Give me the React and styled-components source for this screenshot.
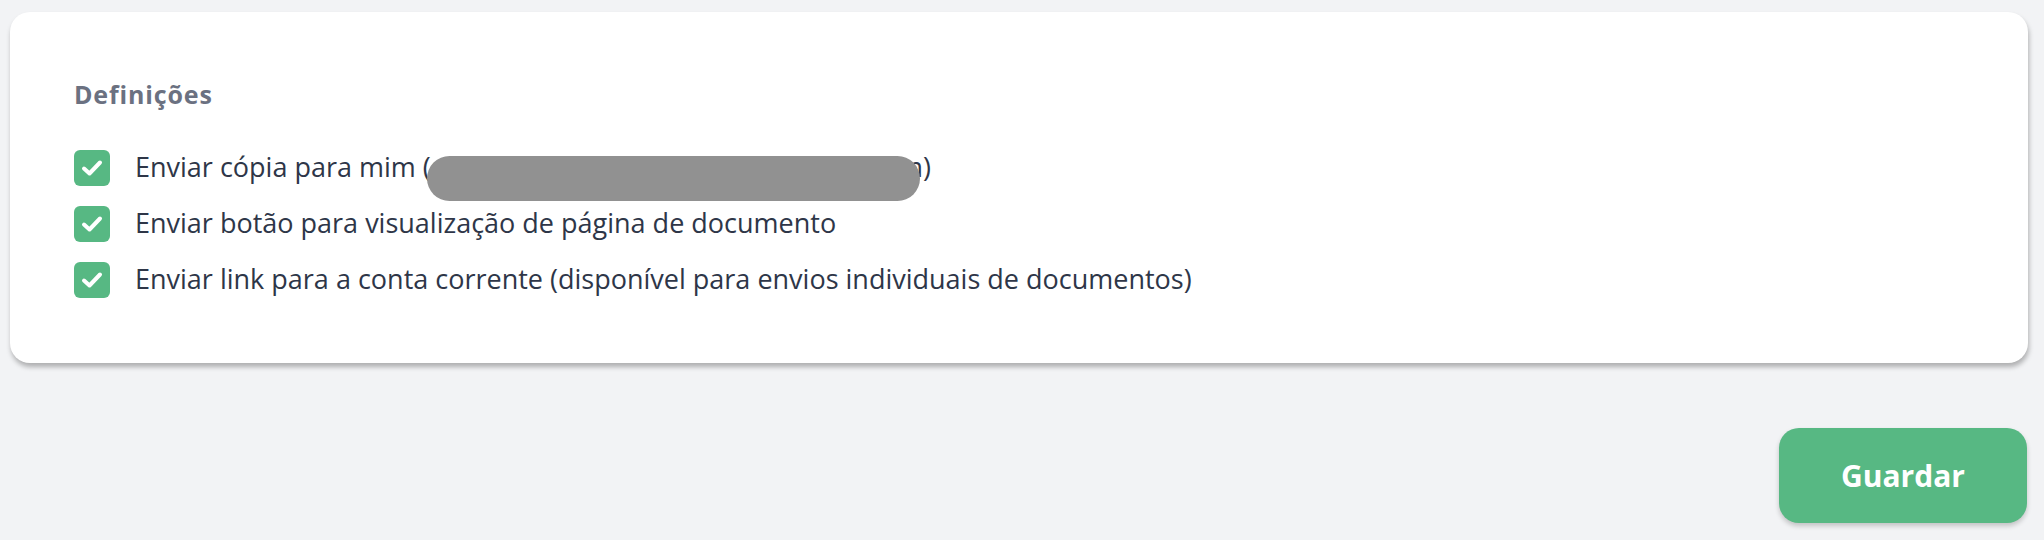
import React from "react";
import styled, { createGlobalStyle } from "styled-components";

const Global = createGlobalStyle`
  html, body { margin: 0; padding: 0; background: #f2f3f5; }
  body { font-family: "Open Sans", "Noto Sans", sans-serif; }
`;

const Page = styled.div`
  box-sizing: border-box;
  min-height: 540px;
  padding: 12px 16px 0 10px;
  display: flex;
  flex-direction: column;
`;

const Card = styled.section`
  background: #ffffff;
  border-radius: 20px;
  box-shadow: 1px 4px 5px rgba(0, 0, 0, 0.28);
  padding: 67px 64px 65px;
  display: flex;
  flex-direction: column;
`;

const Title = styled.h2`
  margin: 0 0 41px;
  font-size: 25px;
  line-height: 30px;
  font-weight: 700;
  letter-spacing: 0.85px;
  color: #6b7181;
`;

const List = styled.div`
  display: flex;
  flex-direction: column;
  gap: 20px;
`;

const Row = styled.label`
  display: flex;
  align-items: center;
  gap: 25px;
  height: 36px;
`;

const Box = styled.span`
  flex: 0 0 36px;
  width: 36px;
  height: 36px;
  border-radius: 6px;
  background: ${(p) => (p.$checked ? "#57b883" : "#ffffff")};
  display: flex;
  align-items: center;
  justify-content: center;
`;

const Label = styled.span`
  position: relative;
  font-size: 27px;
  line-height: 36px;
  padding-bottom: 3px;
  color: #2e3648;
  white-space: nowrap;
`;

const Redacted = styled.span`
  position: absolute;
  top: 7.5px;
  height: 45px;
  left: ${(p) => p.$left}px;
  width: ${(p) => p.$width}px;
  border-radius: 22.5px;
  background: #919191;
`;

const Footer = styled.div`
  display: flex;
  justify-content: flex-end;
  padding-top: 65px;
  padding-right: 1px;
`;

const Button = styled.button`
  width: 248px;
  height: 95px;
  border: none;
  border-radius: 20px;
  background: #57b883;
  color: #ffffff;
  font-family: "Open Sans", "Noto Sans", sans-serif;
  font-weight: 700;
  font-size: 30px;
  box-shadow: 0 3px 5px rgba(0, 0, 0, 0.2);
  cursor: pointer;
`;

const Check = () => (
  <svg width="36" height="36" viewBox="0 0 36 36" fill="none">
    <path
      d="M10 18.5 L15.5 23.5 L26 12.5"
      stroke="#ffffff"
      strokeWidth="4"
      strokeLinecap="round"
      strokeLinejoin="round"
    />
  </svg>
);

const Option = ({ children }) => (
  <Row>
    <Box $checked>
      <Check />
    </Box>
    <Label>{children}</Label>
  </Row>
);

export default function App() {
  return (
    <>
      <Global />
      <Page>
        <Card>
          <Title>Definições</Title>
          <List>
            <Option>
              Enviar cópia para mim (geral.faturacao@minhasempresas.com)
              <Redacted $left={292} $width={493} />
            </Option>
            <Option>Enviar botão para visualização de página de documento</Option>
            <Option>
              Enviar link para a conta corrente (disponível para envios individuais de documentos)
            </Option>
          </List>
        </Card>
        <Footer>
          <Button>Guardar</Button>
        </Footer>
      </Page>
    </>
  );
}
